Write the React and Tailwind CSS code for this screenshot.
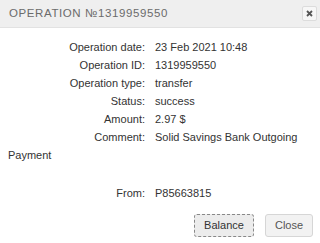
import React from "react";

const rows = [
  ["Operation date:", "23 Feb 2021 10:48"],
  ["Operation ID:", "1319959550"],
  ["Operation type:", "transfer"],
  ["Status:", "success"],
  ["Amount:", "2.97 $"],
];

const App = () => {
  return (
    <div className="w-[320px] h-[243px] bg-white overflow-hidden font-['Liberation_Sans',Arial,sans-serif] text-[11px] text-[#333]">
      <div className="h-[28px] bg-[#efefef] border-b border-[#e2e2e2] flex items-center justify-between pl-[9px] pr-[3px]">
        <span className="text-[11.5px] tracking-[0.6px] text-[#6b6b6b] uppercase">
          Operation №1319959550
        </span>
        <button className="w-[15px] h-[15px] rounded-[2px] border border-[#dcdcdc] bg-[#f7f7f7] flex items-center justify-center">
          <svg width="7" height="7" viewBox="0 0 7 7">
            <path d="M1 1L6 6M6 1L1 6" stroke="#555" strokeWidth="1.8" />
          </svg>
        </button>
      </div>
      <div className="pt-[10px] pl-[8px] leading-[18px]">
        {rows.map(([label, value]) => (
          <div key={label} className="flex">
            <span className="w-[137px] text-right">{label}</span>
            <span className="pl-[10px]">{value}</span>
          </div>
        ))}
        <div>
          <span className="inline-block w-[137px] text-right">Comment:</span>
          <span className="pl-[10px]">Solid Savings Bank Outgoing</span>
          <br />
          Payment
        </div>
        <div className="flex mt-[20px]">
          <span className="w-[137px] text-right">From:</span>
          <span className="pl-[10px]">P85663815</span>
        </div>
      </div>
      <div className="flex justify-end gap-[11px] pr-[7px] mt-[12px]">
        <button className="w-[60px] h-[23px] rounded-[3px] border border-dashed border-[#888] bg-[#ececec] text-[11px] text-[#333]">
          Balance
        </button>
        <button className="w-[48px] h-[23px] rounded-[3px] border border-[#d6d6d6] bg-[#f2f2f2] text-[11px] text-[#555]">
          Close
        </button>
      </div>
    </div>
  );
};

export default App;
